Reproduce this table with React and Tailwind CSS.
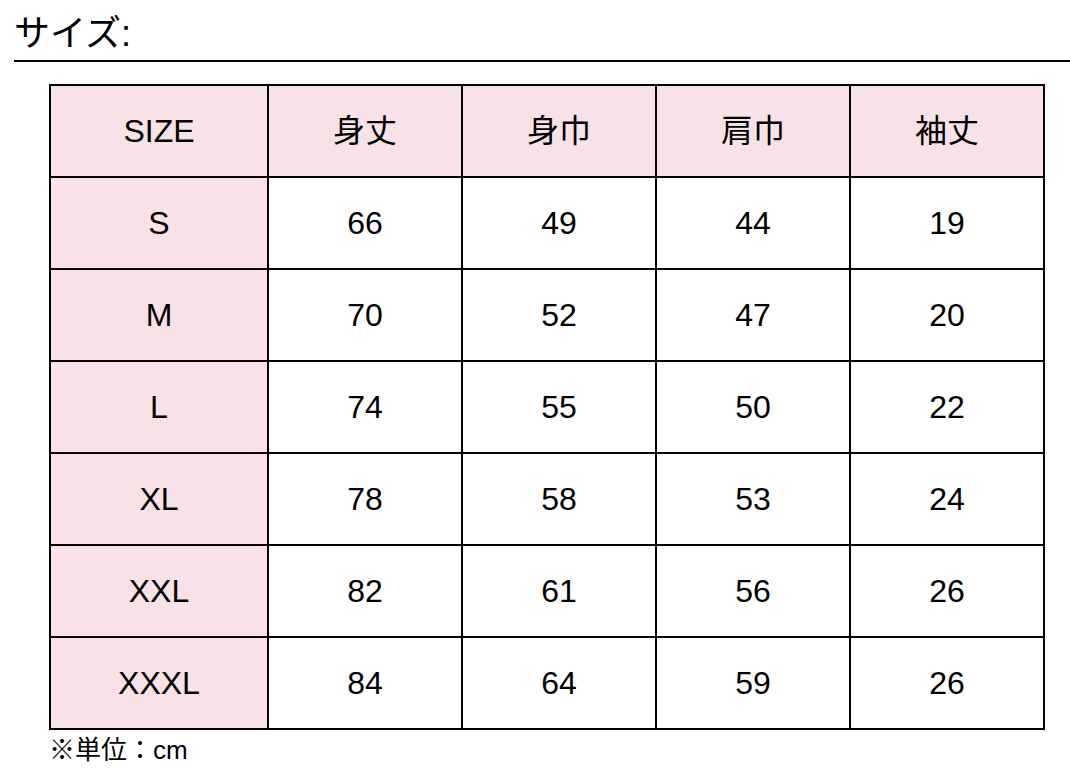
import React from 'react';

const headers = ['SIZE', '身丈', '身巾', '肩巾', '袖丈'];

const rows = [
    ['S', 66, 49, 44, 19],
    ['M', 70, 52, 47, 20],
    ['L', 74, 55, 50, 22],
    ['XL', 78, 58, 53, 24],
    ['XXL', 82, 61, 56, 26],
    ['XXXL', 84, 64, 59, 26],
];

const font = { fontFamily: '"Liberation Sans", "Noto Sans CJK JP", sans-serif' };

const App = () => {
    return (
        <div className="bg-white text-black pl-[14px] pt-[14px] min-h-[772px]" style={font}>
            {/* Title */}
            <h2 className="text-[36px] leading-[40px] pb-[6px] border-b-2 border-black">サイズ:</h2>

            {/* Size table */}
            <div className="pl-[35px] pr-[25px] pt-[22px]">
                <table className="w-[996px] border-collapse table-fixed text-[32px]">
                    <colgroup>
                        <col className="w-[218px]" />
                        <col />
                        <col />
                        <col />
                        <col />
                    </colgroup>
                    <thead>
                        <tr className="h-[92px] bg-[#f8e1e7]">
                            {headers.map(h => (
                                <th key={h} className="border-2 border-black font-normal text-center">{h}</th>
                            ))}
                        </tr>
                    </thead>
                    <tbody>
                        {rows.map(row => (
                            <tr key={row[0]} className="h-[92px]">
                                {row.map((cell, i) => (
                                    <td
                                        key={i}
                                        className={`border-2 border-black text-center ${i === 0 ? 'bg-[#f8e1e7]' : 'bg-white'}`}>
                                        {cell}
                                    </td>
                                ))}
                            </tr>
                        ))}
                    </tbody>
                </table>
                <p className="text-[26px] leading-[32px] mt-[4px]">※単位：cm</p>
            </div>
        </div>
    );
};

export default App;
